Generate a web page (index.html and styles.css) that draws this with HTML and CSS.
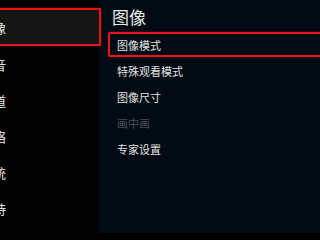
FILE: index.html
```html
<!DOCTYPE html>
<html lang="zh-CN">
<head>
    <meta charset="UTF-8">
    <title>图像设置</title>
    <link rel="stylesheet" href="styles.css">
</head>
<body>
    <div class="screen">
        <ul class="side-menu">
            <li class="side-item active"><span>图像</span></li>
            <li class="side-item"><span>声音</span></li>
            <li class="side-item"><span>频道</span></li>
            <li class="side-item"><span>网络</span></li>
            <li class="side-item"><span>系统</span></li>
            <li class="side-item"><span>支持</span></li>
        </ul>
        <div class="panel">
            <h1 class="panel-title">图像</h1>
            <ul class="options">
                <li class="option focused">图像模式</li>
                <li class="option">特殊观看模式</li>
                <li class="option">图像尺寸</li>
                <li class="option disabled">画中画</li>
                <li class="option">专家设置</li>
            </ul>
        </div>
    </div>
</body>
</html>
```

FILE: styles.css
```css
* { margin: 0; padding: 0; box-sizing: border-box; }
body { width: 320px; height: 240px; overflow: hidden; background: #000; font-family: "Noto Sans CJK SC", "Noto Sans", sans-serif; }
ul { list-style: none; }
.screen { display: flex; height: 240px; }

/* left category list, text runs off the left edge of the screen */
.side-menu { width: 99px; flex-shrink: 0; padding-top: 8px; }
.side-item { height: 36px; display: flex; align-items: center; color: #e6e6e6; font-size: 13px; }
.side-item span { margin-left: -20px; }
.side-item.active { position: relative; z-index: 1; height: 38px; margin-right: -2px; background: #151515; border: 2px solid #e3161b; border-left: none; box-shadow: 0 0 2px rgba(227, 22, 27, 0.6); }

.panel { width: 221px; height: 233px; background: #020b13; padding: 6px 0 0 9px; overflow: hidden; }
.panel-title { font-size: 17px; font-weight: 400; line-height: 22px; color: #e8e8e8; margin-left: 4px; margin-bottom: 4px; }
.option { height: 26px; display: flex; align-items: center; padding-left: 9px; font-size: 11px; color: #e2e2e2; }
.option.focused { height: 25px; margin-bottom: 1px; margin-right: -4px; border: 2px solid #e3161b; border-radius: 2px; box-shadow: 0 0 2px rgba(227, 22, 27, 0.6); padding-left: 7px; }
.option.disabled { color: #4a4f55; }
```
